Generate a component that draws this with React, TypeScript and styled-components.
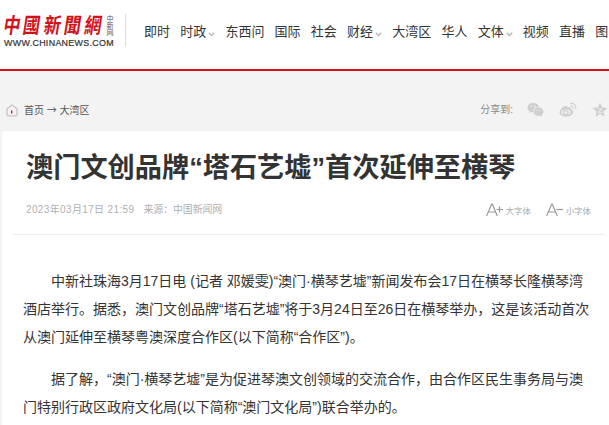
import styled, { createGlobalStyle } from "styled-components";

const COLORS = {
  RED: "#d0121b",
  TEXT: "#333",
  MUTED: "#b0b0b0",
  PAGE: "#f3f3f3",
};

const NAV_ITEMS = [
  { label: "即时" },
  { label: "时政", hasMenu: true },
  { label: "东西问" },
  { label: "国际" },
  { label: "社会" },
  { label: "财经", hasMenu: true },
  { label: "大湾区" },
  { label: "华人" },
  { label: "文体", hasMenu: true },
  { label: "视频" },
  { label: "直播" },
  { label: "图" },
];

const PARAGRAPHS = [
  [
    "中新社珠海3月17日电 (记者 邓媛雯)“澳门·横琴艺墟”新闻发布会17日在横琴长隆横琴湾",
    "酒店举行。据悉，澳门文创品牌“塔石艺墟”将于3月24日至26日在横琴举办，这是该活动首次",
    "从澳门延伸至横琴粤澳深度合作区(以下简称“合作区”)。",
  ],
  [
    "据了解，“澳门·横琴艺墟”是为促进琴澳文创领域的交流合作，由合作区民生事务局与澳",
    "门特别行政区政府文化局(以下简称“澳门文化局”)联合举办的。",
  ],
];

const Logo = () => (
  <LogoSvg viewBox="0 0 115 36">
    <g
      fill={COLORS.RED}
      fontSize="17"
      fontWeight="700"
      transform="skewX(-9) scale(1 1.25)"
    >
      <text x="5.5" y="15">中</text>
      <text x="25" y="15">國</text>
      <text x="46" y="15">新</text>
      <text x="66" y="15">聞</text>
      <text x="86.5" y="15">網</text>
    </g>
    <g fill="#555" fontSize="7">
      <text x="106.5" y="7">中</text>
      <text x="106.5" y="14.2">新</text>
      <text x="106.5" y="21.4">网</text>
    </g>
    <text
      x="4"
      y="31.5"
      fill="#333"
      stroke="#333"
      strokeWidth="0.2"
      fontSize="8.8"
      textLength="110"
      lengthAdjust="spacingAndGlyphs"
      letterSpacing="0.3"
    >
      WWW.CHINANEWS.COM
    </text>
  </LogoSvg>
);

const HomeIcon = () => (
  <svg width="12" height="13" viewBox="0 0 12 13" fill="none">
    <path
      d="M1 4.7 6 1l5 3.7v5.8q0 1.3-1.3 1.3H2.3Q1 11.8 1 10.5Z"
      stroke="#c3c3c3"
      strokeWidth="1.2"
    />
    <path d="M5 6.500h1.300v3H5z" fill={COLORS.RED} />
  </svg>
);

const WechatIcon = () => (
  <svg width="17" height="16" viewBox="0 0 17 16" fill="#cfcfcf">
    <path d="M6.2 1C2.9 1 .5 3 .5 5.7c0 1.5.8 2.7 2 3.6L2 11.2l2.1-1.1 2 .3C5.7 7 8.3 4.7 12 4.9 11.3 2.6 9 1 6.2 1Z" />
    <path d="M11.7 5.6c-2.8 0-5 1.8-5 4.1s2.2 4.2 5 4.2l1.5-.2 1.9 1-.5-1.7c1.2-.8 1.9-1.9 1.9-3.3 0-2.3-2.1-4.1-4.8-4.1Z" />
    <g fill={COLORS.PAGE}>
      <circle cx="4.4" cy="4.3" r=".8" />
      <circle cx="8.1" cy="4.3" r=".8" />
      <circle cx="10.1" cy="8.5" r=".6" />
      <circle cx="13.2" cy="8.5" r=".6" />
    </g>
  </svg>
);

const WeiboIcon = () => (
  <svg width="18" height="16" viewBox="0 0 18 16" fill="none" stroke="#cfcfcf">
    <path
      fill="#cfcfcf"
      stroke="none"
      fillRule="evenodd"
      d="M6.5 4C4.3 4.2.5 7.9.5 10.5c0 2.4 3 4 6.3 4 4.3 0 7.5-2.1 7.5-4.6 0-1.3-.9-2-2.2-2.3.6-2.1-.8-2.9-3.5-1.8C8.8 4.5 8 3.8 6.5 4ZM6.7 7.4c2.7-.2 5 1 5 2.7s-2 3-4.7 3.2-4.8-.9-4.8-2.7 1.9-3 4.5-3.2Z"
    />
    <ellipse cx="6.7" cy="10.5" rx="2.3" ry="1.9" strokeWidth="1.4" />
    <path d="M11.5 4.1q2.9-.4 2.6 2.7M11.5 1.4q5.6-.5 5.3 5.3" strokeWidth="1.1" />
  </svg>
);

const StarIcon = () => (
  <svg width="16" height="16" viewBox="0 0 16 16">
    <path
      fill="#cfcfcf"
      d="m8 .5 2 5.1 5.500.4-4.200 3.500 1.300 5.300L8 11.900l-4.600 2.900 1.300-5.300L.5 6 6 5.600Z"
    />
    <path d="M5.500 7h5L6 10.400h4.500" fill="none" stroke={COLORS.PAGE} strokeWidth=".8" />
  </svg>
);

const FontSizeIcon = ({ larger }: { larger?: boolean }) => (
  <svg
    width="17"
    height="14"
    viewBox="0 0 17 14"
    fill="none"
    stroke="#999"
    strokeWidth="1.2"
  >
    <path d="M.5 13 5.700 1h.6l5 12M2.400 9h7.200" />
    <path d={larger ? "M10.5 6.5H17M13.5 3.5v6" : "M10.5 6.5H17"} />
  </svg>
);

const App = () => (
  <>
    <GlobalStyle />
    <Page>
      <Header>
        <Logo />
        <Divider />
        <Nav>
          {NAV_ITEMS.map(({ label, hasMenu }) => (
            <NavItem key={label}>
              {label}
              {hasMenu && (
                <Chevron viewBox="0 0 7 5">
                  <path d="M.8.8 3.500 3.500 6.200.8" />
                </Chevron>
              )}
            </NavItem>
          ))}
        </Nav>
      </Header>

      <Toolbar>
        <Breadcrumb>
          <HomeIcon />
          <span>首页 → 大湾区</span>
        </Breadcrumb>
        <Share>
          <ShareLabel>分享到:</ShareLabel>
          <WechatIcon />
          <WeiboIcon />
          <StarIcon />
        </Share>
      </Toolbar>

      <Article>
        <Title>澳门文创品牌“塔石艺墟”首次延伸至横琴</Title>
        <Meta>
          <PublishedAt>2023年03月17日 21:59</PublishedAt>
          <Source>来源：中国新闻网</Source>
          <SizeButton>
            <FontSizeIcon larger />
            大字体
          </SizeButton>
          <SizeButton>
            <FontSizeIcon />
            小字体
          </SizeButton>
        </Meta>
        <Body>
          {PARAGRAPHS.map((lines) => (
            <Paragraph key={lines[0]}>
              {lines.map((line) => (
                <Line key={line}>{line}</Line>
              ))}
            </Paragraph>
          ))}
        </Body>
      </Article>
    </Page>
  </>
);

const GlobalStyle = createGlobalStyle`
  * {
    box-sizing: border-box;
  }

  body {
    margin: 0;
    overflow: hidden;
    color: ${COLORS.TEXT};
    background: ${COLORS.PAGE};
    font-family: "Liberation Sans", "Noto Sans CJK SC", sans-serif;
  }

  svg {
    flex-shrink: 0;
  }
`;

const Page = styled.div`
  width: 609px;
  height: 425px;
  overflow: hidden;
`;

const Header = styled.header`
  display: flex;
  align-items: flex-start;
  height: 71px;
  background: #fff;
  border-bottom: 2px solid ${COLORS.RED};
`;

const LogoSvg = styled.svg`
  width: 115px;
  height: 36px;
  margin-top: 14px;
  overflow: visible;
`;

const Divider = styled.div`
  width: 1px;
  height: 33px;
  margin: 14px 18px 0 10px;
  background: #ddd;
`;

const Nav = styled.nav`
  display: flex;
  gap: 10.2px;
  padding-top: 22px;
`;

const NavItem = styled.a`
  display: flex;
  align-items: center;
  flex-shrink: 0;
  font-size: 13px;
  line-height: 20px;
  white-space: nowrap;
`;

const Chevron = styled.svg`
  width: 7px;
  height: 5px;
  margin: 4px 0 0 2px;
  fill: none;
  stroke: #b5b5b5;
  stroke-width: 1.3;
`;

const Toolbar = styled.div`
  display: flex;
  justify-content: space-between;
  height: 60px;
  padding: 29px 1px 0 6px;
  font-size: 10px;
  line-height: 20px;
`;

const Breadcrumb = styled.div`
  display: flex;
  align-items: center;
  gap: 6px;
  height: 20px;
  color: #555;
  font-family: "Noto Sans CJK SC", sans-serif;
  word-spacing: 0.5px;
`;

const Share = styled.div`
  display: flex;
  align-items: center;
  gap: 15px;
  height: 20px;
`;

const ShareLabel = styled.span`
  margin-right: -1px;
  color: #888;
`;

const Article = styled.main`
  height: 400px;
  margin-left: 2px;
  padding: 19px 4px 0 10px;
  background: #fff;
  border-top-left-radius: 3px;
`;

const Title = styled.h1`
  margin: 0;
  padding-left: 14px;
  font-size: 27.2px;
  line-height: 36px;
  white-space: nowrap;
`;

const Meta = styled.div`
  display: flex;
  align-items: center;
  height: 49px;
  padding: 0 14px 3px 14px;
  color: ${COLORS.MUTED};
  font-size: 10px;
  border-bottom: 1px solid #eee;
`;

const PublishedAt = styled.span`
  letter-spacing: 0.36px;
`;

const Source = styled.span`
  margin: 0 auto 0 9px;
  letter-spacing: -0.15px;
`;

const SizeButton = styled.button`
  display: flex;
  align-items: center;
  gap: 3px;
  margin-left: 15px;
  padding: 2px 0 0;
  color: #aaa;
  font-family: inherit;
  font-size: 8.4px;
  background: none;
  border: none;
`;

const Body = styled.div`
  padding: 32px 0 0 11px;
`;

const Paragraph = styled.p`
  margin: 0 0 14px;
  font-size: 14px;
  line-height: 28px;
  text-indent: 28px;
`;

const Line = styled.span`
  display: block;
  white-space: nowrap;

  & + & {
    text-indent: 0;
  }
`;

export default App;
